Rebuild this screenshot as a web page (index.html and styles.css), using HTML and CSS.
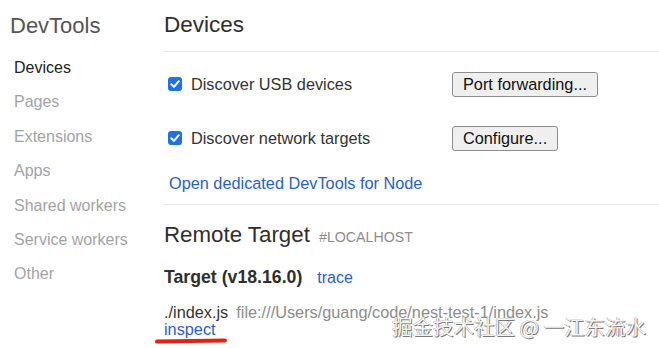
FILE: index.html
```html
<!DOCTYPE html>
<html lang="en">
<head>
<meta charset="utf-8">
<title>DevTools - Devices</title>
<link rel="stylesheet" href="styles.css">
</head>
<body>
<div class="page">
  <aside class="sidebar">
    <div class="sidebar-title">DevTools</div>
    <nav class="nav">
      <div class="nav-item active">Devices</div>
      <div class="nav-item">Pages</div>
      <div class="nav-item">Extensions</div>
      <div class="nav-item">Apps</div>
      <div class="nav-item">Shared workers</div>
      <div class="nav-item">Service workers</div>
      <div class="nav-item">Other</div>
    </nav>
  </aside>
  <main class="content">
    <header class="content-header">
      <h1 class="page-title">Devices</h1>
    </header>
    <section class="devices">
      <div class="option-row">
        <label class="option">
          <span class="checkbox"><svg viewBox="0 0 14 14" width="14" height="14"><path d="M3.3 7.2 L6 9.9 L10.8 4.2" fill="none" stroke="#fff" stroke-width="2" stroke-linecap="round" stroke-linejoin="round"/></svg></span>
          <span>Discover USB devices</span>
        </label>
        <button class="btn">Port forwarding...</button>
      </div>
      <div class="option-row second">
        <label class="option">
          <span class="checkbox"><svg viewBox="0 0 14 14" width="14" height="14"><path d="M3.3 7.2 L6 9.9 L10.8 4.2" fill="none" stroke="#fff" stroke-width="2" stroke-linecap="round" stroke-linejoin="round"/></svg></span>
          <span>Discover network targets</span>
        </label>
        <button class="btn">Configure...</button>
      </div>
      <a class="link node-link">Open dedicated DevTools for Node</a>
    </section>
    <section class="remote">
      <h2 class="section-title">Remote Target <span class="host">#LOCALHOST</span></h2>
      <div class="target-title">
        <span class="target-name">Target (v18.16.0)</span>
        <a class="link">trace</a>
      </div>
      <div class="target-item">
        <span class="item-name">./index.js</span>
        <span class="item-url">file:///Users/guang/code/nest-test-1/index.js</span>
      </div>
      <div class="actions">
        <a class="link inspect">inspect<span class="annotation"></span></a>
      </div>
    </section>
  </main>
  <div class="watermark">掘金技术社区 @ 一江东流水</div>
</div>
</body>
</html>
```

FILE: styles.css
```css
html, body {
  margin: 0;
  padding: 0;
  background: #fff;
}

body {
  font-family: "Liberation Sans", Arial, sans-serif;
  font-size: 16px;
  color: #333;
  width: 659px;
  height: 348px;
  overflow: hidden;
}

.page {
  position: relative;
  display: flex;
  height: 348px;
}

.sidebar {
  width: 164px;
  flex: none;
  padding-top: 13px;
  box-sizing: border-box;
}

.sidebar-title {
  font-size: 22px;
  line-height: 26px;
  color: #555;
  padding-left: 10px;
}

.nav {
  margin-top: 12px;
  padding-left: 14px;
}

.nav-item {
  height: 34.4px;
  line-height: 34.4px;
  font-size: 16px;
  color: #a3a3a3;
}

.nav-item.active {
  color: #222;
}

.content {
  flex: 1;
  min-width: 0;
}

.content-header {
  padding: 12px 0 13px;
  border-bottom: 1px solid #e8e8e8;
}

.page-title {
  margin: 0;
  font-size: 22.5px;
  line-height: 26px;
  font-weight: normal;
  color: #2e2e2e;
}

.devices {
  padding: 20px 0 11px 5px;
  border-bottom: 1px solid #e8e8e8;
  font-size: 16.3px;
}

.option-row {
  display: grid;
  grid-template-columns: 283px auto;
  align-items: center;
  height: 25px;
}

.option-row.second {
  margin-top: 29px;
}

.option {
  display: flex;
  align-items: center;
  gap: 9px;
  line-height: 25px;
  color: #333;
}

.checkbox {
  display: inline-flex;
  width: 14px;
  height: 14px;
  margin-top: -2px;
  margin-left: -1px;
  border-radius: 3px;
  background: #1f6fe9;
}

.btn {
  justify-self: start;
  font-family: inherit;
  font-size: 16.3px;
  color: #111;
  height: 25px;
  padding: 0 10px;
  background: #efefef;
  border: 1px solid #8d8d8d;
  border-radius: 3px;
  line-height: 23px;
}

.link {
  color: #2a5fc0;
  text-decoration: none;
}

.node-link {
  display: block;
  margin-top: 22px;
  line-height: 20px;
}

.remote {
  padding-top: 17px;
}

.section-title {
  margin: 0;
  font-size: 22.3px;
  line-height: 26px;
  font-weight: normal;
  color: #2e2e2e;
}

.host {
  margin-left: 3px;
  font-size: 14.2px;
  color: #8c8c8c;
}

.target-title {
  display: flex;
  align-items: baseline;
  gap: 15px;
  margin-top: 16px;
  line-height: 22px;
}

.target-name {
  font-size: 17.7px;
  font-weight: bold;
  color: #2e2e2e;
}

.target-item {
  display: flex;
  gap: 8px;
  margin-top: 15px;
  line-height: 17px;
  font-size: 16.3px;
}

.item-name {
  color: #333;
}

.item-url {
  color: #8c8c8c;
}

.actions {
  line-height: 17px;
  font-size: 16.3px;
}

.inspect {
  position: relative;
}

.annotation {
  position: absolute;
  left: -9px;
  top: 19px;
  width: 72px;
  height: 3.5px;
  border-radius: 2px;
  background: #e32119;
  transform: rotate(-1deg);
}

.watermark {
  position: absolute;
  left: 392px;
  top: 313px;
  font-family: "Noto Sans CJK SC", sans-serif;
  font-size: 20.5px;
  line-height: 26px;
  color: #f4f4f4;
  text-shadow: 1px 1px 0 #7a7a7a, -0.5px -0.5px 0 #9a9a9a;
  white-space: nowrap;
}
```
